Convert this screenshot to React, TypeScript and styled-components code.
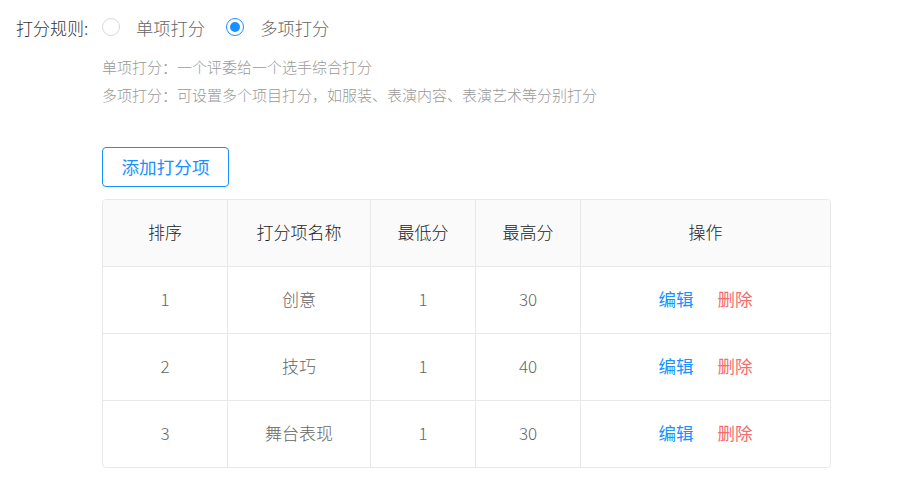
import React from "react";
import styled, { createGlobalStyle } from "styled-components";

const Global = createGlobalStyle`
  html, body { margin: 0; padding: 0; background: #fff; }
  body { font-family: "Noto Sans CJK SC", "Noto Sans", sans-serif; color: #333; font-weight: 300; }
`;

const Page = styled.div`
  padding: 0 0 0 16px;
  width: 899px;
  box-sizing: border-box;
`;

const RuleRow = styled.div`
  display: flex;
  align-items: center;
  height: 54px;
`;

const Label = styled.span`
  width: 86px;
  font-size: 17px;
  color: #333;
  white-space: nowrap;
`;

const Option = styled.label`
  display: flex;
  align-items: center;
  gap: 16px;
  margin-right: 21px;
  font-size: 17.3px;
  color: #666;
  cursor: pointer;
`;

const Circle = styled.span<{ $checked?: boolean }>`
  width: 18px;
  height: 18px;
  box-sizing: border-box;
  border-radius: 50%;
  border: 1px solid ${(p) => (p.$checked ? "#1890ff" : "#d9d9d9")};
  display: flex;
  align-items: center;
  justify-content: center;
  &::after {
    content: "";
    display: ${(p) => (p.$checked ? "block" : "none")};
    width: 10px;
    height: 10px;
    border-radius: 50%;
    background: #1890ff;
  }
`;

const Content = styled.div`
  padding-left: 86px;
`;

const Desc = styled.div`
  font-size: 15px;
  line-height: 28px;
  color: #999;
`;

const DescBlock = styled.div`
  margin-top: -1px;
  margin-bottom: 38px;
`;

const AddButton = styled.button`
  height: 40px;
  width: 127px;
  box-sizing: border-box;
  border: 1px solid #1890ff;
  border-radius: 4px;
  background: #fff;
  color: #1890ff;
  font-family: inherit;
  font-weight: 400;
  font-size: 17.6px;
  padding: 0 0 2px;
  cursor: pointer;
`;

const TableWrap = styled.div`
  margin-top: 12px;
  width: 729px;
  border: 1px solid #e8e8e8;
  border-radius: 4px;
  overflow: hidden;
  box-sizing: border-box;
`;

const Table = styled.table`
  border-collapse: collapse;
  width: 100%;
  table-layout: fixed;
`;

const Th = styled.th<{ $w?: number }>`
  width: ${(p) => (p.$w ? `${p.$w}px` : "auto")};
  height: 63px;
  background: #fafafa;
  font-weight: 300;
  font-size: 17px;
  color: #222;
  text-align: center;
  border-right: 1px solid #e8e8e8;
  border-bottom: 1px solid #e8e8e8;
  padding: 0 0 3px;
  &:last-child { border-right: none; }
`;

const Td = styled.td`
  height: 63px;
  font-size: 17px;
  color: #666;
  text-align: center;
  border-right: 1px solid #e8e8e8;
  border-bottom: 1px solid #e8e8e8;
  padding: 0 0 3px;
  &:last-child { border-right: none; }
  tr:last-child > & { border-bottom: none; }
`;

const Actions = styled.div`
  display: flex;
  justify-content: center;
  gap: 24px;
`;

const Action = styled.a<{ $danger?: boolean }>`
  font-size: 17.5px;
  font-weight: 400;
  color: ${(p) => (p.$danger ? "#f56c6c" : "#1890ff")};
  cursor: pointer;
`;

const rows = [
  { idx: 1, name: "创意", min: 1, max: 30 },
  { idx: 2, name: "技巧", min: 1, max: 40 },
  { idx: 3, name: "舞台表现", min: 1, max: 30 },
];

export default function App() {
  return (
    <>
      <Global />
      <Page>
        <RuleRow>
          <Label>打分规则:</Label>
          <Option>
            <Circle />
            单项打分
          </Option>
          <Option>
            <Circle $checked />
            多项打分
          </Option>
        </RuleRow>
        <Content>
          <DescBlock>
            <Desc>单项打分：一个评委给一个选手综合打分</Desc>
            <Desc>多项打分：可设置多个项目打分，如服装、表演内容、表演艺术等分别打分</Desc>
          </DescBlock>
          <AddButton>添加打分项</AddButton>
          <TableWrap>
            <Table>
              <thead>
                <tr>
                  <Th $w={124}>排序</Th>
                  <Th $w={142}>打分项名称</Th>
                  <Th $w={104}>最低分</Th>
                  <Th $w={104}>最高分</Th>
                  <Th>操作</Th>
                </tr>
              </thead>
              <tbody>
                {rows.map((r) => (
                  <tr key={r.idx}>
                    <Td>{r.idx}</Td>
                    <Td>{r.name}</Td>
                    <Td>{r.min}</Td>
                    <Td>{r.max}</Td>
                    <Td>
                      <Actions>
                        <Action>编辑</Action>
                        <Action $danger>删除</Action>
                      </Actions>
                    </Td>
                  </tr>
                ))}
              </tbody>
            </Table>
          </TableWrap>
        </Content>
      </Page>
    </>
  );
}
